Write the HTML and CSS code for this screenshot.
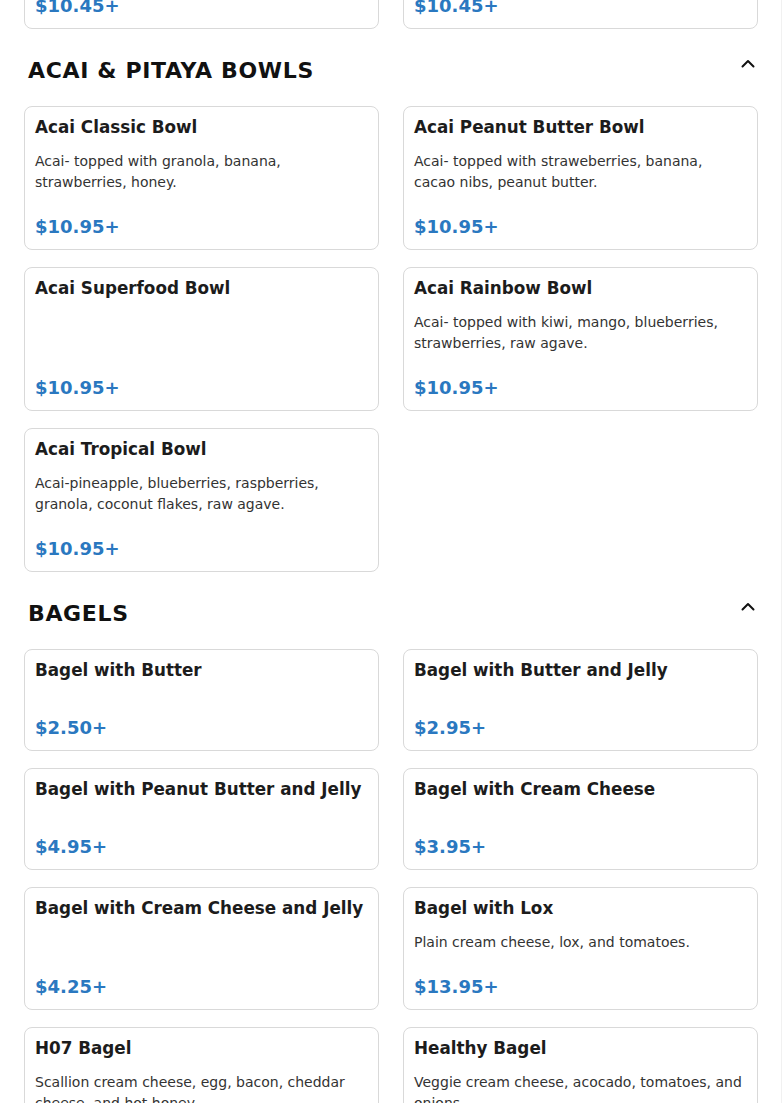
FILE: index.html
```html
<!DOCTYPE html>
<html>
<head>
<meta charset="utf-8">
<link rel="stylesheet" href="styles.css">
</head>
<body>
<main class="menu">
  <div class="grid grid-prev">
    <div class="card"><h3 class="title">Acai Pitaya Special</h3><p class="desc"></p><div class="price">$10.45+</div></div>
    <div class="card"><h3 class="title">Pitaya Special</h3><p class="desc"></p><div class="price">$10.45+</div></div>
  </div>

  <section class="section">
    <div class="section-head">
      <h2 class="section-title">ACAI &amp; PITAYA BOWLS</h2>
      <button class="toggle" aria-label="Collapse"><svg width="16" height="14" viewBox="0 0 16 14"><path d="M2.5 9.5 L8 4 L13.5 9.5" fill="none" stroke="#111" stroke-width="2" stroke-linecap="round" stroke-linejoin="round"/></svg></button>
    </div>
    <div class="grid">
      <div class="card"><h3 class="title">Acai Classic Bowl</h3><p class="desc">Acai- topped with granola, banana, strawberries, honey.</p><div class="price">$10.95+</div></div>
      <div class="card"><h3 class="title">Acai Peanut Butter Bowl</h3><p class="desc">Acai- topped with straweberries, banana, cacao nibs, peanut butter.</p><div class="price">$10.95+</div></div>
      <div class="card"><h3 class="title">Acai Superfood Bowl</h3><p class="desc"></p><div class="price">$10.95+</div></div>
      <div class="card"><h3 class="title">Acai Rainbow Bowl</h3><p class="desc">Acai- topped with kiwi, mango, blueberries, strawberries, raw agave.</p><div class="price">$10.95+</div></div>
      <div class="card"><h3 class="title">Acai Tropical Bowl</h3><p class="desc">Acai-pineapple, blueberries, raspberries, granola, coconut flakes, raw agave.</p><div class="price">$10.95+</div></div>
    </div>
  </section>

  <section class="section">
    <div class="section-head">
      <h2 class="section-title">BAGELS</h2>
      <button class="toggle" aria-label="Collapse"><svg width="16" height="14" viewBox="0 0 16 14"><path d="M2.5 9.5 L8 4 L13.5 9.5" fill="none" stroke="#111" stroke-width="2" stroke-linecap="round" stroke-linejoin="round"/></svg></button>
    </div>
    <div class="grid">
      <div class="card"><h3 class="title">Bagel with Butter</h3><p class="desc"></p><div class="price">$2.50+</div></div>
      <div class="card"><h3 class="title">Bagel with Butter and Jelly</h3><p class="desc"></p><div class="price">$2.95+</div></div>
      <div class="card"><h3 class="title">Bagel with Peanut Butter and Jelly</h3><p class="desc"></p><div class="price">$4.95+</div></div>
      <div class="card"><h3 class="title">Bagel with Cream Cheese</h3><p class="desc"></p><div class="price">$3.95+</div></div>
      <div class="card"><h3 class="title">Bagel with Cream Cheese and Jelly</h3><p class="desc"></p><div class="price">$4.25+</div></div>
      <div class="card"><h3 class="title">Bagel with Lox</h3><p class="desc">Plain cream cheese, lox, and tomatoes.</p><div class="price">$13.95+</div></div>
      <div class="card"><h3 class="title">H07 Bagel</h3><p class="desc">Scallion cream cheese, egg, bacon, cheddar cheese, and hot honey.</p><div class="price">$12.95+</div></div>
      <div class="card"><h3 class="title">Healthy Bagel</h3><p class="desc">Veggie cream cheese, acocado, tomatoes, and onions.</p><div class="price">$12.95+</div></div>
    </div>
  </section>
</main>
</body>
</html>
```

FILE: styles.css
```css
* { box-sizing: border-box; }
html, body { margin: 0; padding: 0; background: #fff; }
body {
  font-family: "DejaVu Sans", "Liberation Sans", sans-serif;
  color: #1a1a1a;
  overflow: hidden;
  box-shadow: inset -1px 0 0 #f1f1f1;
  min-height: 1103px;
}
.menu { padding: 0 24px; }
.grid {
  display: grid;
  grid-template-columns: 355px 355px;
  column-gap: 24px;
  row-gap: 17px;
}
.grid-prev { margin-top: -73px; }
.card {
  border: 1px solid #d9d9d9;
  border-radius: 8px;
  padding: 10px;
  display: flex;
  flex-direction: column;
  background: #fff;
}
.title {
  margin: 0;
  font-size: 16.8px;
  line-height: 20px;
  font-weight: bold;
  color: #1c1c1c;
}
.desc {
  margin: 14px 0 0 0;
  font-size: 14px;
  line-height: 21px;
  color: #333;
  flex: 1;
}
.price {
  margin-top: 22px;
  font-size: 18px;
  line-height: 24px;
  font-weight: bold;
  color: #2a78c0;
}
.section { margin-top: 28px; }
.section-head {
  display: flex;
  justify-content: space-between;
  align-items: flex-start;
  padding-left: 4px;
  margin-bottom: 21px;
}
.section-title {
  margin: 0;
  font-size: 22px;
  line-height: 28px;
  font-weight: bold;
  letter-spacing: 0.65px;
  color: #111;
}
.toggle {
  border: 0;
  background: none;
  padding: 0;
  margin-right: 2px;
  width: 16px;
  height: 14px;
  display: flex;
  cursor: pointer;
}
```
